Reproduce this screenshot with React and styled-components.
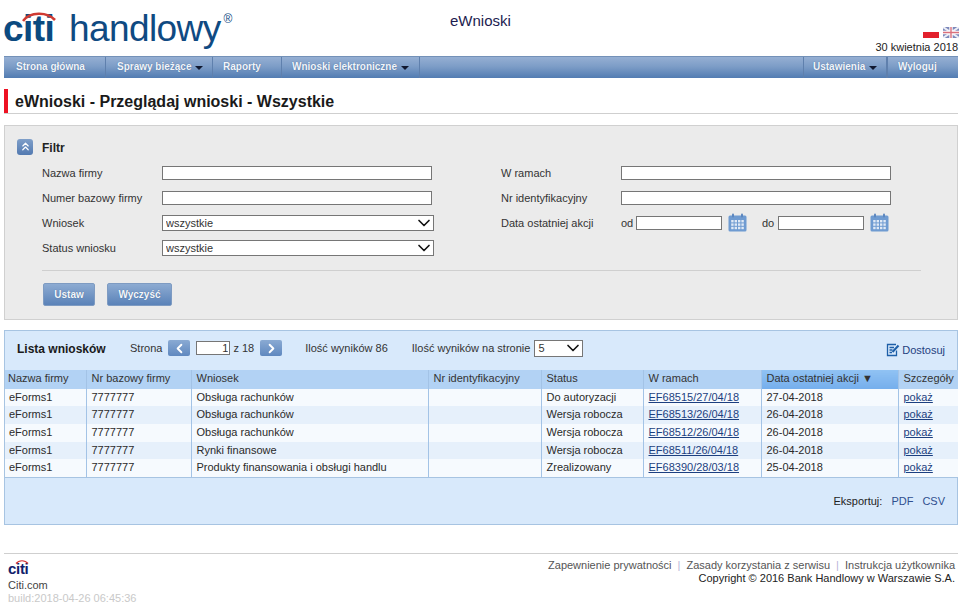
import React from "react";
import styled, { createGlobalStyle } from "styled-components";
import { ChevronDown, ChevronsUp, ChevronLeft, ChevronRight } from "lucide-react";

const FONT = '"Liberation Sans", Arial, sans-serif';

const GlobalStyle = createGlobalStyle`
  html, body {
    margin: 0;
    padding: 0;
    background: #fff;
    font-family: ${FONT};
    font-size: 11px;
    color: #222;
  }
  * { box-sizing: border-box; }
`;

const rows = [
  ["eForms1", "7777777", "Obsługa rachunków", "", "Do autoryzacji", "EF68515/27/04/18", "27-04-2018"],
  ["eForms1", "7777777", "Obsługa rachunków", "", "Wersja robocza", "EF68513/26/04/18", "26-04-2018"],
  ["eForms1", "7777777", "Obsługa rachunków", "", "Wersja robocza", "EF68512/26/04/18", "26-04-2018"],
  ["eForms1", "7777777", "Rynki finansowe", "", "Wersja robocza", "EF68511/26/04/18", "26-04-2018"],
  ["eForms1", "7777777", "Produkty finansowania i obsługi handlu", "", "Zrealizowany", "EF68390/28/03/18", "25-04-2018"],
];

const columns = [
  { title: "Nazwa firmy", width: 81 },
  { title: "Nr bazowy firmy", width: 105 },
  { title: "Wniosek", width: 237 },
  { title: "Nr identyfikacyjny", width: 113 },
  { title: "Status", width: 102 },
  { title: "W ramach", width: 118 },
  { title: "Data ostatniej akcji ▼", width: 137, sorted: true },
  { title: "Szczegóły", width: 60 },
];

const Page = styled.div`
  width: 962px;
  height: 611px;
  padding: 0 4px;
  overflow: hidden;
`;

const Header = styled.header`
  height: 56px;
  display: grid;
  grid-template-columns: 446px 1fr auto;
`;

const Logo = styled.div`
  position: relative;
  display: flex;
  align-items: baseline;
  height: 56px;
  padding-top: 8px;
  margin-left: -1px;
  color: #0f4a82;
  white-space: nowrap;
`;

const LogoMark = styled.span`
  font-size: 37px;
  font-weight: 700;
  letter-spacing: -0.6px;
  color: #0b4a80;
  margin-right: 15px;
`;

const LogoWord = styled.span`
  font-size: 37px;
  letter-spacing: -0.6px;
`;

const Registered = styled.span`
  align-self: flex-start;
  font-size: 12px;
  line-height: 1;
  margin: 5px 0 0 3px;
`;

const Arc = styled.svg`
  position: absolute;
  left: ${(p) => p.$left}px;
  top: ${(p) => p.$top}px;
`;

const AppTitle = styled.div`
  font-size: 15px;
  color: #1c1c50;
  padding-top: 12px;
`;

const HeaderRight = styled.div`
  display: flex;
  flex-direction: column;
  align-items: flex-end;
  padding-top: 27px;
  gap: 3px;
  font-size: 11px;
`;

const Flags = styled.div`
  display: flex;
  gap: 4px;
  margin-right: -1px;
`;

const Nav = styled.nav`
  height: 22px;
  display: flex;
  justify-content: space-between;
  background: linear-gradient(#95afd3, #7d9dc7 45%, #527cb2);
  border-top: 1px solid #7391b8;
`;

const NavGroup = styled.div`
  display: flex;
`;

const NavItem = styled.div`
  width: ${(p) => p.$w}px;
  display: flex;
  align-items: center;
  gap: 4px;
  font-size: 10px;
  font-weight: 700;
  color: #f1f5fb;
  text-shadow: 0 0 1px #3f628f;
  border-right: ${(p) => (p.$noRight ? "none" : "1px solid #5f80ad")};
  border-left: ${(p) => (p.$left ? "1px solid #5f80ad" : "none")};
  padding: 0 0 2px ${(p) => p.$pl}px;
`;

const Caret = styled.span`
  width: 0;
  height: 0;
  border-left: 4px solid transparent;
  border-right: 4px solid transparent;
  border-top: 4px solid #101830;
  margin-top: 2px;
`;

const TitleBar = styled.div`
  margin-top: 11px;
  height: 25px;
  display: flex;
  align-items: center;
  border-bottom: 1px solid #cfcfcf;
`;

const RedMark = styled.span`
  width: 4px;
  height: 24px;
  background: #ee1122;
  margin-right: 7px;
`;

const PageTitle = styled.h1`
  margin: 0;
  padding-top: 2px;
  font-size: 16px;
  font-weight: 700;
  color: #1a1a1a;
`;

const FilterPanel = styled.section`
  margin-top: 11px;
  height: 195px;
  background: #ebebeb;
  border: 1px solid #d0d0d0;
  padding: 12px 36px 0 12px;
`;

const FilterHead = styled.div`
  display: flex;
  align-items: center;
  gap: 9px;
  height: 17px;
  font-size: 12px;
  font-weight: 700;
  color: #222;
`;

const FilterName = styled.span`
  padding-top: 2px;
`;

const CollapseButton = styled.span`
  width: 16px;
  height: 16px;
  border-radius: 3px;
  display: flex;
  align-items: center;
  justify-content: center;
  background: linear-gradient(#7f9fc9, #5279b0);
  color: #fff;
`;

const FilterGrid = styled.div`
  margin: 5px 0 0 25px;
  display: grid;
  grid-template-columns: 459px 1fr;
`;

const FilterColumn = styled.div`
  display: flex;
  flex-direction: column;
`;

const FieldRow = styled.div`
  height: 25px;
  display: flex;
  align-items: center;
`;

const Label = styled.label`
  width: ${(p) => p.$w || 120}px;
  flex: none;
  color: #333;
`;

const TextInput = styled.input`
  width: ${(p) => p.$w || 270}px;
  height: 14px;
  border: 1px solid #767676;
  background: #fff;
  padding: 0 2px;
  font: 11px ${FONT};
  border-radius: 0;
  outline: none;
`;

const SelectWrap = styled.div`
  position: relative;
  width: ${(p) => p.$w}px;
  height: ${(p) => p.$h}px;
  margin-left: ${(p) => p.$ml || 0}px;
`;

const Select = styled.select`
  appearance: none;
  width: 100%;
  height: 100%;
  border: 1px solid #767676;
  background: #fff;
  padding: 0 3px;
  font: 11px ${FONT};
  color: #333;
  border-radius: 0;
`;

const SelectArrow = styled.span`
  position: absolute;
  right: 0;
  top: 50%;
  transform: translateY(-50%);
  display: flex;
  pointer-events: none;
  color: #111;
`;

const DateLabel = styled.span`
  color: #333;
  width: ${(p) => p.$w}px;
  flex: none;
`;

const CalendarWrap = styled.span`
  display: flex;
  margin: 0 ${(p) => p.$mr}px 0 6px;
`;

const Divider = styled.hr`
  margin: 10px 0 0 25px;
  height: 1px;
  border: none;
  background: #cfcfcf;
`;

const ButtonRow = styled.div`
  margin: 12px 0 0 26px;
  display: flex;
  gap: 12px;
`;

const Button = styled.button`
  width: ${(p) => p.$w}px;
  height: 23px;
  padding: 0;
  border: 1px solid #7e9bc2;
  border-radius: 2px;
  background: linear-gradient(#8dabd2, #5a82b8);
  font: 700 10px ${FONT};
  color: #f4f7fb;
  text-shadow: 0 0 1px #3f628f;
`;

const ListPanel = styled.section`
  margin-top: 10px;
  height: 195px;
  background: #d8e9fb;
  border: 1px solid #a7c4e2;
`;

const Toolbar = styled.div`
  height: 39px;
  display: flex;
  align-items: center;
  padding: 0 0 5px 12px;
  color: #333;
`;

const ListTitle = styled.strong`
  font-size: 12px;
  color: #1a1a1a;
  width: 113px;
  flex: none;
  padding-top: 2px;
`;

const PagerLabel = styled.span`
  margin-left: ${(p) => p.$ml || 0}px;
  white-space: nowrap;
`;

const PagerButton = styled.span`
  width: 22px;
  height: 16px;
  margin-left: ${(p) => p.$ml}px;
  display: flex;
  align-items: center;
  justify-content: center;
  border-radius: 2px;
  background: linear-gradient(#8aaad3, #5f88bf);
  color: #fff;
`;

const PageInput = styled.input`
  width: 34px;
  height: 14px;
  margin: 0 3px 0 6px;
  border: 1px solid #767676;
  background: #fff;
  padding: 0 1px;
  text-align: right;
  font: 11px ${FONT};
  color: #333;
  border-radius: 0;
`;

const Customize = styled.a`
  margin: 3px 12px 0 auto;
  display: flex;
  align-items: center;
  gap: 2px;
  color: #1f3f7f;
`;

const Table = styled.table`
  width: 953px;
  border-collapse: collapse;
  table-layout: fixed;
  border-bottom: 1px solid #a7c4e2;
`;

const Th = styled.th`
  height: 19px;
  padding: 0 0 3px ${(p) => (p.$first ? 3 : 5)}px;
  text-align: left;
  font-weight: 400;
  font-size: 11px;
  color: #333;
  white-space: nowrap;
  overflow: hidden;
  background: ${(p) => (p.$sorted ? "linear-gradient(#90c2f3, #75aeec)" : "#b2d2f4")};
  border-left: ${(p) => (p.$first ? "none" : "1px solid #a3c3e6")};
`;

const Td = styled.td`
  height: ${(p) => p.$h}px;
  padding: 0 0 2px ${(p) => (p.$first ? 4 : 5)}px;
  font-size: 11px;
  color: #2a2a2a;
  white-space: nowrap;
  overflow: hidden;
  background: ${(p) => (p.$alt ? "#e6f0fb" : "#f6fafe")};
  border-left: ${(p) => (p.$first ? "none" : "1px solid #a3c3e6")};
`;

const TableLink = styled.a`
  color: #1c3f80;
  text-decoration: underline;
`;

const ExportRow = styled.div`
  display: flex;
  justify-content: flex-end;
  gap: 9px;
  padding: 17px 12px 0 0;
  color: #222;
`;

const ExportLink = styled.a`
  color: #2f4f8f;
`;

const Footer = styled.footer`
  margin-top: 28px;
  border-top: 1px solid #cfcfcf;
  display: flex;
  justify-content: space-between;
  padding: 5px 3px 0 4px;
`;

const FooterLeft = styled.div`
  display: flex;
  flex-direction: column;
`;

const SmallLogo = styled.div`
  position: relative;
  height: 18px;
  font-size: 15px;
  font-weight: 700;
  letter-spacing: -0.3px;
  color: #10206a;
  padding-top: 1px;
`;

const CitiLink = styled.div`
  margin-top: 2px;
  color: #444;
`;

const BuildInfo = styled.div`
  margin-top: 1px;
  color: #c9c9c9;
`;

const FooterRight = styled.div`
  display: flex;
  flex-direction: column;
  align-items: flex-end;
  gap: 1px;
`;

const FooterLinks = styled.div`
  display: flex;
  gap: 6px;
  color: #555;
`;

const Sep = styled.span`
  color: #b9b4d8;
`;

const Copyright = styled.div`
  color: #222;
`;

function CalendarIcon() {
  const cells = [];
  for (let y = 0; y < 3; y++) {
    for (let x = 0; x < 4; x++) {
      cells.push(<rect key={`${x}-${y}`} x={3.2 + x * 3.4} y={7 + y * 3.4} width="2.4" height="2.4" fill="#dfe9f6" />);
    }
  }
  return (
    <svg width="19" height="19" viewBox="0 0 19 19">
      <rect x="0.5" y="2.5" width="18" height="16" rx="1.5" fill="#6f9bd1" />
      <rect x="4" y="0.5" width="2" height="4" rx="1" fill="#5b86bf" />
      <rect x="13" y="0.5" width="2" height="4" rx="1" fill="#5b86bf" />
      {cells}
    </svg>
  );
}

function PolishFlag() {
  return (
    <svg width="16" height="11" viewBox="0 0 16 11">
      <rect width="16" height="5" fill="#fff" />
      <rect y="5" width="16" height="6" fill="#e2202c" />
    </svg>
  );
}

function BritishFlag() {
  return (
    <svg width="16" height="11" viewBox="0 0 16 11">
      <rect width="16" height="11" fill="#7c88ba" />
      <path d="M0 0 16 11M16 0 0 11" stroke="#eceef6" strokeWidth="2" />
      <path d="M8 0V11M0 5.5H16" stroke="#fff" strokeWidth="3.4" />
      <path d="M8 0V11M0 5.5H16" stroke="#d9707c" strokeWidth="1.4" />
    </svg>
  );
}

function EditIcon() {
  return (
    <svg width="14" height="14" viewBox="0 0 14 14" fill="none" stroke="#1d5fa8" strokeWidth="1.3">
      <path d="M10.5 7.5V12.5H1.5V1.5H10" />
      <path d="M3.5 4.5H8M3.5 7H6.5M3.5 9.5H6" />
      <path d="M6.5 9 12.5 2.5" strokeWidth="2" />
    </svg>
  );
}

function Dropdown({ value, width, height, marginLeft }) {
  return (
    <SelectWrap $w={width} $h={height} $ml={marginLeft}>
      <Select defaultValue={value}>
        <option>{value}</option>
      </Select>
      <SelectArrow>
        <ChevronDown size={20} strokeWidth={2} />
      </SelectArrow>
    </SelectWrap>
  );
}

export default function App() {
  return (
    <Page>
      <GlobalStyle />
      <Header>
        <Logo>
          <LogoMark>citi</LogoMark>
          <LogoWord>handlowy</LogoWord>
          <Registered>®</Registered>
          <Arc $left={19} $top={10} width="34" height="12" viewBox="0 0 34 12" fill="none">
            <path d="M1 11C8 1.5 25 1.5 33 10" stroke="#cf3a32" strokeWidth="2.6" />
          </Arc>
        </Logo>
        <AppTitle>eWnioski</AppTitle>
        <HeaderRight>
          <Flags>
            <PolishFlag />
            <BritishFlag />
          </Flags>
          <span>30 kwietnia 2018</span>
        </HeaderRight>
      </Header>

      <Nav>
        <NavGroup>
          <NavItem $w={102} $pl={12}>Strona główna</NavItem>
          <NavItem $w={107} $pl={11}>
            Sprawy bieżące <Caret />
          </NavItem>
          <NavItem $w={69} $pl={10}>Raporty</NavItem>
          <NavItem $w={138} $pl={10}>
            Wnioski elektroniczne <Caret />
          </NavItem>
        </NavGroup>
        <NavGroup>
          <NavItem $w={84} $pl={9} $left>
            Ustawienia <Caret />
          </NavItem>
          <NavItem $w={71} $pl={10} $left $noRight>
            Wyloguj
          </NavItem>
        </NavGroup>
      </Nav>

      <TitleBar>
        <RedMark />
        <PageTitle>eWnioski - Przeglądaj wnioski - Wszystkie</PageTitle>
      </TitleBar>

      <FilterPanel>
        <FilterHead>
          <CollapseButton>
            <ChevronsUp size={13} strokeWidth={2.2} />
          </CollapseButton>
          <FilterName>Filtr</FilterName>
        </FilterHead>
        <FilterGrid>
          <FilterColumn>
            <FieldRow>
              <Label>Nazwa firmy</Label>
              <TextInput />
            </FieldRow>
            <FieldRow>
              <Label>Numer bazowy firmy</Label>
              <TextInput />
            </FieldRow>
            <FieldRow>
              <Label>Wniosek</Label>
              <Dropdown value="wszystkie" width={272} height={16} />
            </FieldRow>
            <FieldRow>
              <Label>Status wniosku</Label>
              <Dropdown value="wszystkie" width={272} height={16} />
            </FieldRow>
          </FilterColumn>
          <FilterColumn>
            <FieldRow>
              <Label>W ramach</Label>
              <TextInput />
            </FieldRow>
            <FieldRow>
              <Label>Nr identyfikacyjny</Label>
              <TextInput />
            </FieldRow>
            <FieldRow>
              <Label>Data ostatniej akcji</Label>
              <DateLabel $w={15}>od</DateLabel>
              <TextInput $w={86} />
              <CalendarWrap $mr={15}>
                <CalendarIcon />
              </CalendarWrap>
              <DateLabel $w={16}>do</DateLabel>
              <TextInput $w={86} />
              <CalendarWrap $mr={0}>
                <CalendarIcon />
              </CalendarWrap>
            </FieldRow>
          </FilterColumn>
        </FilterGrid>
        <Divider />
        <ButtonRow>
          <Button $w={52}>Ustaw</Button>
          <Button $w={65}>Wyczyść</Button>
        </ButtonRow>
      </FilterPanel>

      <ListPanel>
        <Toolbar>
          <ListTitle>Lista wniosków</ListTitle>
          <PagerLabel>Strona</PagerLabel>
          <PagerButton $ml={6}>
            <ChevronLeft size={15} strokeWidth={3} />
          </PagerButton>
          <PageInput defaultValue="1" />
          <PagerLabel>z 18</PagerLabel>
          <PagerButton $ml={6}>
            <ChevronRight size={15} strokeWidth={3} />
          </PagerButton>
          <PagerLabel $ml={23}>Ilość wyników 86</PagerLabel>
          <PagerLabel $ml={24}>Ilość wyników na stronie</PagerLabel>
          <Dropdown value="5" width={49} height={17} marginLeft={4} />
          <Customize>
            <EditIcon />
            Dostosuj
          </Customize>
        </Toolbar>
        <Table>
          <colgroup>
            {columns.map((c) => (
              <col key={c.title} style={{ width: c.width }} />
            ))}
          </colgroup>
          <thead>
            <tr>
              {columns.map((c, i) => (
                <Th key={c.title} $first={i === 0} $sorted={c.sorted}>
                  {c.title}
                </Th>
              ))}
            </tr>
          </thead>
          <tbody>
            {rows.map((row, r) => (
              <tr key={row[5]}>
                {row.map((cell, i) => (
                  <Td key={i} $first={i === 0} $alt={r % 2 === 1} $h={r === 0 || r === 3 ? 17 : 18}>
                    {i === 5 ? <TableLink>{cell}</TableLink> : cell}
                  </Td>
                ))}
                <Td $alt={r % 2 === 1} $h={r === 0 || r === 3 ? 17 : 18}>
                  <TableLink>pokaż</TableLink>
                </Td>
              </tr>
            ))}
          </tbody>
        </Table>
        <ExportRow>
          <span>Eksportuj:</span>
          <ExportLink>PDF</ExportLink>
          <ExportLink>CSV</ExportLink>
        </ExportRow>
      </ListPanel>

      <Footer>
        <FooterLeft>
          <SmallLogo>
            citi
            <Arc $left={7} $top={0} width="14" height="5" viewBox="0 0 14 5" fill="none">
              <path d="M1 4.5C4 0.8 10 0.8 13 4.5" stroke="#d3312f" strokeWidth="1.2" />
            </Arc>
          </SmallLogo>
          <CitiLink>Citi.com</CitiLink>
          <BuildInfo>build:2018-04-26 06:45:36</BuildInfo>
        </FooterLeft>
        <FooterRight>
          <FooterLinks>
            <span>Zapewnienie prywatności</span>
            <Sep>|</Sep>
            <span>Zasady korzystania z serwisu</span>
            <Sep>|</Sep>
            <span>Instrukcja użytkownika</span>
          </FooterLinks>
          <Copyright>Copyright © 2016 Bank Handlowy w Warszawie S.A.</Copyright>
        </FooterRight>
      </Footer>
    </Page>
  );
}
